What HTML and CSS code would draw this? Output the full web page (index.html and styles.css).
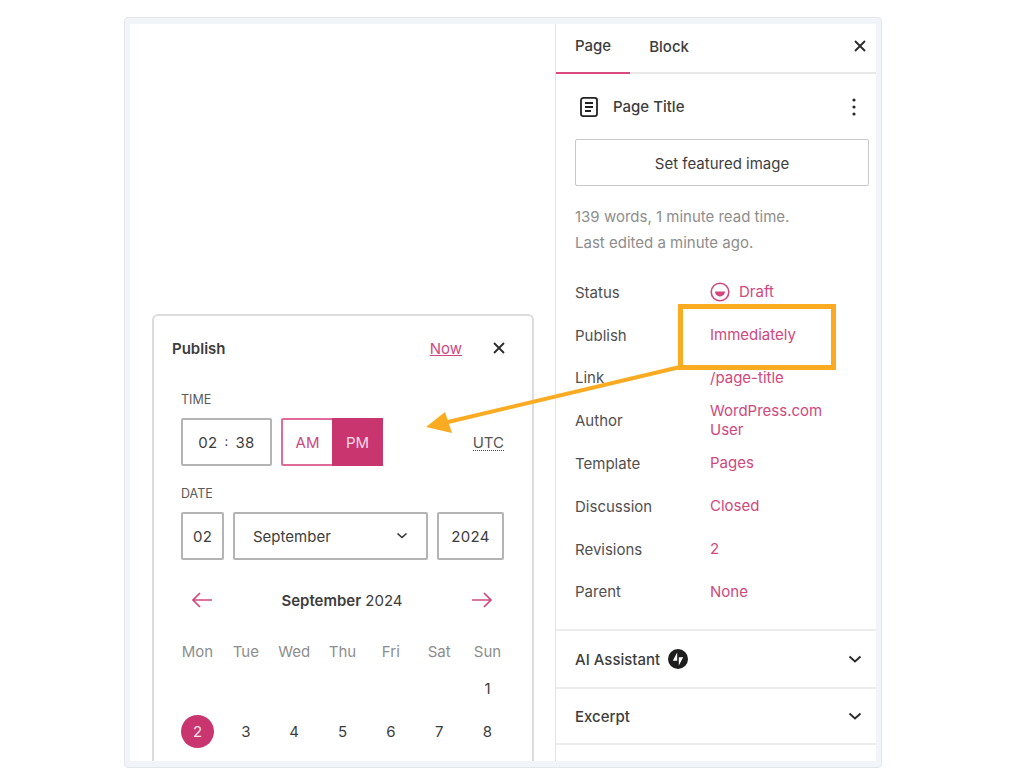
FILE: index.html
```html
<!DOCTYPE html>
<html lang="en">
<head>
    <meta charset="UTF-8">
    <title>Publish settings</title>
    <link rel="stylesheet" href="styles.css">
</head>
<body>
    <div class="frame">
        <div class="editor">
            <main class="canvas">
                <section class="popover">
                    <div class="popover-head">
                        <h2>Publish</h2>
                        <a class="now">Now</a>
                        <svg class="close" width="14" height="14" viewBox="0 0 14 14"><path d="M2 2l10 10M12 2L2 12"/></svg>
                    </div>
                    <div class="popover-body">
                        <div class="field-label">Time</div>
                        <div class="time-row">
                            <div class="input time-input"><span>02</span><span class="colon">:</span><span>38</span></div>
                            <div class="ampm">
                                <span class="am">AM</span>
                                <span class="pm">PM</span>
                            </div>
                            <span class="utc">UTC</span>
                        </div>
                        <div class="field-label date-label">Date</div>
                        <div class="date-row">
                            <div class="input day-input">02</div>
                            <div class="input month-input">
                                <span>September</span>
                                <svg width="12" height="8" viewBox="0 0 12 8"><path d="M1.5 1.5L6 5.5l4.5-4"/></svg>
                            </div>
                            <div class="input year-input">2024</div>
                        </div>
                        <div class="cal-head">
                            <svg class="cal-arrow" width="24" height="16" viewBox="0 0 24 16"><path d="M22 8H3M10 1L3 8l7 7"/></svg>
                            <div class="cal-title"><b>September</b> 2024</div>
                            <svg class="cal-arrow" width="24" height="16" viewBox="0 0 24 16"><path d="M2 8h19M14 1l7 7-7 7"/></svg>
                        </div>
                        <div class="cal-grid weekdays">
                            <span>Mon</span><span>Tue</span><span>Wed</span><span>Thu</span><span>Fri</span><span>Sat</span><span>Sun</span>
                        </div>
                        <div class="cal-grid days">
                            <span></span><span></span><span></span><span></span><span></span><span></span><span>1</span>
                            <span class="today">2</span><span>3</span><span>4</span><span>5</span><span>6</span><span>7</span><span>8</span>
                        </div>
                    </div>
                </section>
            </main>

            <aside class="sidebar">
                <div class="tabs">
                    <a class="tab active">Page</a>
                    <a class="tab">Block</a>
                    <svg class="close" width="14" height="14" viewBox="0 0 14 14"><path d="M2 2l10 10M12 2L2 12"/></svg>
                </div>
                <div class="page-panel">
                    <div class="title-row">
                        <svg class="page-icon" width="20" height="20" viewBox="0 0 20 20"><rect x="2" y="0.9" width="16" height="18.2" rx="2.4"/><path d="M6 6h8M6 10h8M6 14h6"/></svg>
                        <span class="page-title">Page Title</span>
                        <svg class="dots" width="4" height="18" viewBox="0 0 4 18"><circle cx="2" cy="2" r="1.6"/><circle cx="2" cy="9" r="1.6"/><circle cx="2" cy="16" r="1.6"/></svg>
                    </div>
                    <button class="featured">Set featured image</button>
                    <p class="meta">139 words, 1 minute read time.<br>Last edited a minute ago.</p>
                    <dl class="props">
                        <dt>Status</dt>
                        <dd class="status">
                            <svg width="20" height="20" viewBox="0 0 20 20"><circle class="ring" cx="10" cy="10" r="8.8"/><path class="half" d="M5 9.5h10a5 5 0 0 1-10 0z"/></svg>
                            Draft
                        </dd>
                        <dt>Publish</dt><dd>Immediately</dd>
                        <dt>Link</dt><dd>/page-title</dd>
                        <dt>Author</dt><dd>WordPress.com User</dd>
                        <dt>Template</dt><dd>Pages</dd>
                        <dt>Discussion</dt><dd>Closed</dd>
                        <dt>Revisions</dt><dd>2</dd>
                        <dt>Parent</dt><dd>None</dd>
                    </dl>
                </div>
                <div class="fold">
                    <span>AI Assistant</span>
                    <svg class="bolt" width="20" height="20" viewBox="0 0 20 20"><circle cx="10" cy="10" r="10"/><path d="M9.2 3.5v8.3H4.8zM10.8 16.5V8.2h4.4z"/></svg>
                    <svg class="chev" width="14" height="9" viewBox="0 0 14 9"><path d="M1.5 1.5L7 6.5l5.5-5"/></svg>
                </div>
                <div class="fold">
                    <span>Excerpt</span>
                    <svg class="chev" width="14" height="9" viewBox="0 0 14 9"><path d="M1.5 1.5L7 6.5l5.5-5"/></svg>
                </div>
            </aside>
        </div>
    </div>

    <!-- orange callout drawn over the screenshot -->
    <svg class="callout" width="1024" height="784" viewBox="0 0 1024 784">
        <rect class="callout-box" x="680.5" y="306.5" width="153" height="61"/>
        <path class="callout-line" d="M680 367L448 422"/>
        <path class="callout-head" d="M426 427L445 412L452 433z"/>
    </svg>
</body>
</html>
```

FILE: styles.css
```css
* {
    box-sizing: border-box;
}

body {
    margin: 0;
    padding-top: 17px;
    background: #fff;
    color: #3d3d3d;
    font-family: Inter, "Liberation Sans", sans-serif;
    font-size: 15px;
}

svg {
    display: block;
    flex-shrink: 0;
}

.frame {
    width: 758px;
    height: 751px;
    margin-left: 124px;
    padding: 6px 5px 6px 5px;
    background: #f1f4f8;
    border: 1px solid #e3e7ec;
    border-radius: 4px;
}

.editor {
    display: flex;
    height: 100%;
    background: #fff;
    overflow: hidden;
}

.canvas {
    flex: 1;
    padding: 290px 21px 0 22px;
}

.popover {
    height: 480px;
    background: #fff;
    border: 2px solid #dcdcdc;
    border-radius: 6px;
}

.popover-head {
    display: flex;
    align-items: center;
    height: 64px;
    padding: 0 26px 0 18px;
}

.popover-head h2 {
    flex: 1;
    margin: 0;
    font-size: 15px;
    font-weight: 600;
}

.now {
    margin-right: 30px;
    color: #d0487e;
    text-decoration: underline;
}

.close path {
    fill: none;
    stroke: #2a2a2a;
    stroke-width: 1.8;
}

.popover-body {
    padding: 10px 28px 0 27px;
}

.field-label {
    height: 19px;
    margin-bottom: 9px;
    font-size: 12.5px;
    line-height: 19px;
    color: #5a5a5a;
    text-transform: uppercase;
}

.date-label {
    margin-top: 18px;
}

.time-row {
    display: flex;
    align-items: center;
    gap: 9px;
    height: 48px;
}

.input {
    display: flex;
    align-items: center;
    justify-content: center;
    height: 48px;
    background: #fff;
    border: 2px solid #b4b4b4;
    border-radius: 2px;
    letter-spacing: 0.3px;
}

.time-input {
    gap: 7px;
    width: 91px;
}

.colon {
    margin-top: -2px;
    font-size: 13px;
}

.ampm {
    display: flex;
    width: 102px;
    height: 48px;
    border: 2px solid #e06b98;
    border-radius: 2px;
}

.ampm span {
    display: flex;
    align-items: center;
    justify-content: center;
}

.ampm .am {
    width: 49px;
    color: #d0487e;
}

.ampm .pm {
    flex: 1;
    margin: -2px -2px -2px 0;
    background: #c9356e;
    color: #fbdbe7;
}

.utc {
    margin: 3px 0 0 auto;
    border-bottom: 1px dotted #444;
    line-height: 14px;
    color: #555;
}

.date-row {
    display: flex;
    gap: 9px;
}

.day-input {
    width: 43px;
}

.month-input {
    flex: 1;
    justify-content: space-between;
    padding: 0 18px 0 18px;
    letter-spacing: 0;
}

.month-input path {
    fill: none;
    stroke: #333;
    stroke-width: 1.6;
}

.year-input {
    width: 67px;
}

.cal-head {
    display: flex;
    align-items: center;
    justify-content: space-between;
    height: 40px;
    margin-top: 20px;
    padding: 0 0 0 9px;
}

.cal-arrow path {
    fill: none;
    stroke: #d0487e;
    stroke-width: 1.7;
}

.cal-arrow:last-child {
    margin-right: 10px;
}

.cal-title b {
    font-weight: 600;
}

.cal-grid {
    display: grid;
    grid-template-columns: repeat(7, 33px);
    justify-content: space-between;
    text-align: center;
}

.weekdays {
    margin-top: 20px;
    color: #8d8d8d;
}

.weekdays span {
    line-height: 24px;
}

.days {
    margin-top: 8px;
    row-gap: 10px;
}

.days span {
    display: flex;
    align-items: center;
    justify-content: center;
    height: 33px;
}

.days .today {
    border-radius: 50%;
    background: #c9356e;
    color: #fbe3ec;
}

.sidebar {
    width: 321px;
    border-left: 1px solid #e4e4e4;
}

.tabs {
    display: flex;
    align-items: stretch;
    height: 50px;
    border-bottom: 2px solid #e8e8e8;
}

.tab {
    display: flex;
    align-items: center;
    padding: 0 19px 6px;
    margin-bottom: -2px;
    font-weight: 500;
}

.tab.active {
    border-bottom: 2px solid #d9487f;
}

.tabs .close {
    align-self: center;
    margin: 0 9px 4px auto;
}

.page-panel {
    padding: 0 7px 16px 19px;
}

.title-row {
    display: flex;
    align-items: center;
    height: 65px;
    padding-left: 4px;
}

.page-icon rect, .page-icon path {
    fill: none;
    stroke: #222;
    stroke-width: 1.8;
}

.page-title {
    flex: 1;
    margin-left: 14px;
    font-weight: 500;
}

.dots {
    margin-right: 13px;
    fill: #2a2a2a;
}

.featured {
    display: block;
    width: 294px;
    height: 47px;
    padding-top: 2px;
    background: #fff;
    border: 1px solid #c8c8c8;
    border-radius: 2px;
    color: #3d3d3d;
    font: inherit;
}

.meta {
    margin: 18px 0 0;
    color: #8d8d8d;
    line-height: 26px;
}

.props {
    display: grid;
    grid-template-columns: 135px 130px;
    grid-auto-rows: minmax(42.8px, auto);
    align-items: center;
    margin: 15px 0 0;
}

.props dt {
    color: #505050;
}

.props dd {
    margin: 0;
    color: #d0487e;
    line-height: 18.5px;
}

.status {
    display: flex;
    align-items: center;
    gap: 9px;
}

.ring {
    fill: none;
    stroke: #d0487e;
    stroke-width: 1.6;
}

.half {
    fill: #d0487e;
}

.fold {
    display: flex;
    align-items: center;
    gap: 8px;
    height: 58px;
    padding: 0 14px 0 19px;
    border-top: 2px solid #ececec;
    font-weight: 500;
}

.bolt circle {
    fill: #1d1d1d;
}

.bolt path {
    fill: #fff;
}

.chev {
    margin-left: auto;
}

.chev path {
    fill: none;
    stroke: #2a2a2a;
    stroke-width: 1.9;
}

.fold:last-child {
    border-bottom: 2px solid #ececec;
}

.callout {
    position: absolute;
    top: 0;
    left: 0;
}

.callout-box {
    fill: none;
    stroke: #fbab21;
    stroke-width: 5;
}

.callout-line {
    fill: none;
    stroke: #fbab21;
    stroke-width: 4;
}

.callout-head {
    fill: #fbab21;
}
```
